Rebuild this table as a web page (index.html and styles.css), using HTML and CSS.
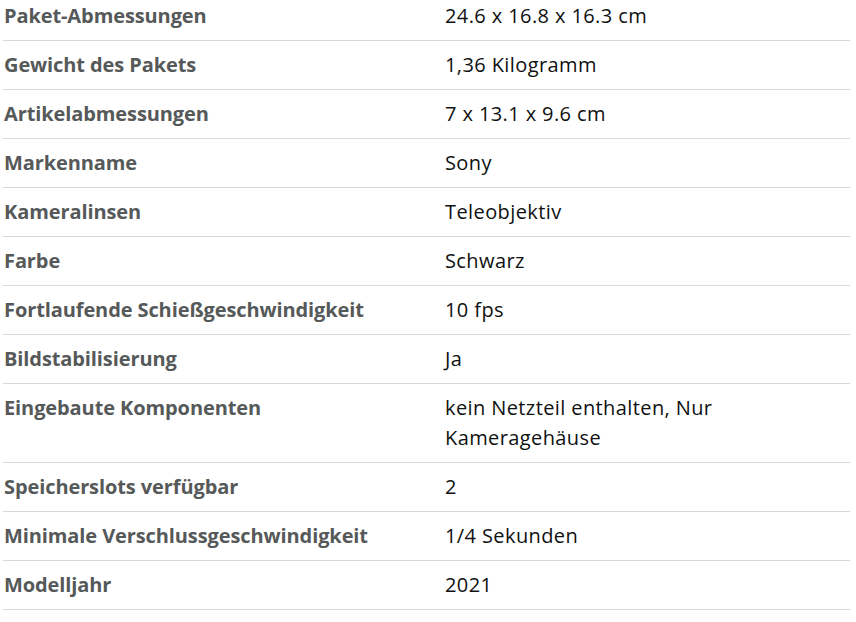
FILE: index.html
```html
<!DOCTYPE html>
<html lang="de">
<head>
<meta charset="utf-8">
<link rel="stylesheet" href="styles.css">
</head>
<body>
<div class="specs">
  <div class="row"><div class="label">Paket-Abmessungen</div><div class="value">24.6 x 16.8 x 16.3 cm</div></div>
  <div class="row"><div class="label">Gewicht des Pakets</div><div class="value">1,36 Kilogramm</div></div>
  <div class="row"><div class="label">Artikelabmessungen</div><div class="value">7 x 13.1 x 9.6 cm</div></div>
  <div class="row"><div class="label">Markenname</div><div class="value">Sony</div></div>
  <div class="row"><div class="label">Kameralinsen</div><div class="value">Teleobjektiv</div></div>
  <div class="row"><div class="label">Farbe</div><div class="value">Schwarz</div></div>
  <div class="row"><div class="label">Fortlaufende Schießgeschwindigkeit</div><div class="value">10 fps</div></div>
  <div class="row"><div class="label">Bildstabilisierung</div><div class="value">Ja</div></div>
  <div class="row"><div class="label">Eingebaute Komponenten</div><div class="value">kein Netzteil enthalten, Nur<br>Kameragehäuse</div></div>
  <div class="row"><div class="label">Speicherslots verfügbar</div><div class="value">2</div></div>
  <div class="row"><div class="label">Minimale Verschlussgeschwindigkeit</div><div class="value">1/4 Sekunden</div></div>
  <div class="row"><div class="label">Modelljahr</div><div class="value">2021</div></div>
</div>
</body>
</html>
```
FILE: styles.css
```css
html, body {
  margin: 0;
  padding: 0;
  background: #ffffff;
}
body {
  font-family: "Open Sans", "Noto Sans", sans-serif;
  font-size: 20px;
  overflow: hidden;
}
.specs {
  width: 847px;
  margin: -8px 0 0 3px;
}
.row {
  display: grid;
  grid-template-columns: 441px 1fr;
  border-bottom: 1px solid #d5d9d9;
  padding: 9px 0;
  line-height: 30px;
}
.label {
  padding-left: 1px;
  font-weight: 700;
  color: #565959;
  letter-spacing: -0.1px;
}
.value {
  padding-left: 1px;
  color: #0f1111;
  letter-spacing: 0.4px;
}
```
